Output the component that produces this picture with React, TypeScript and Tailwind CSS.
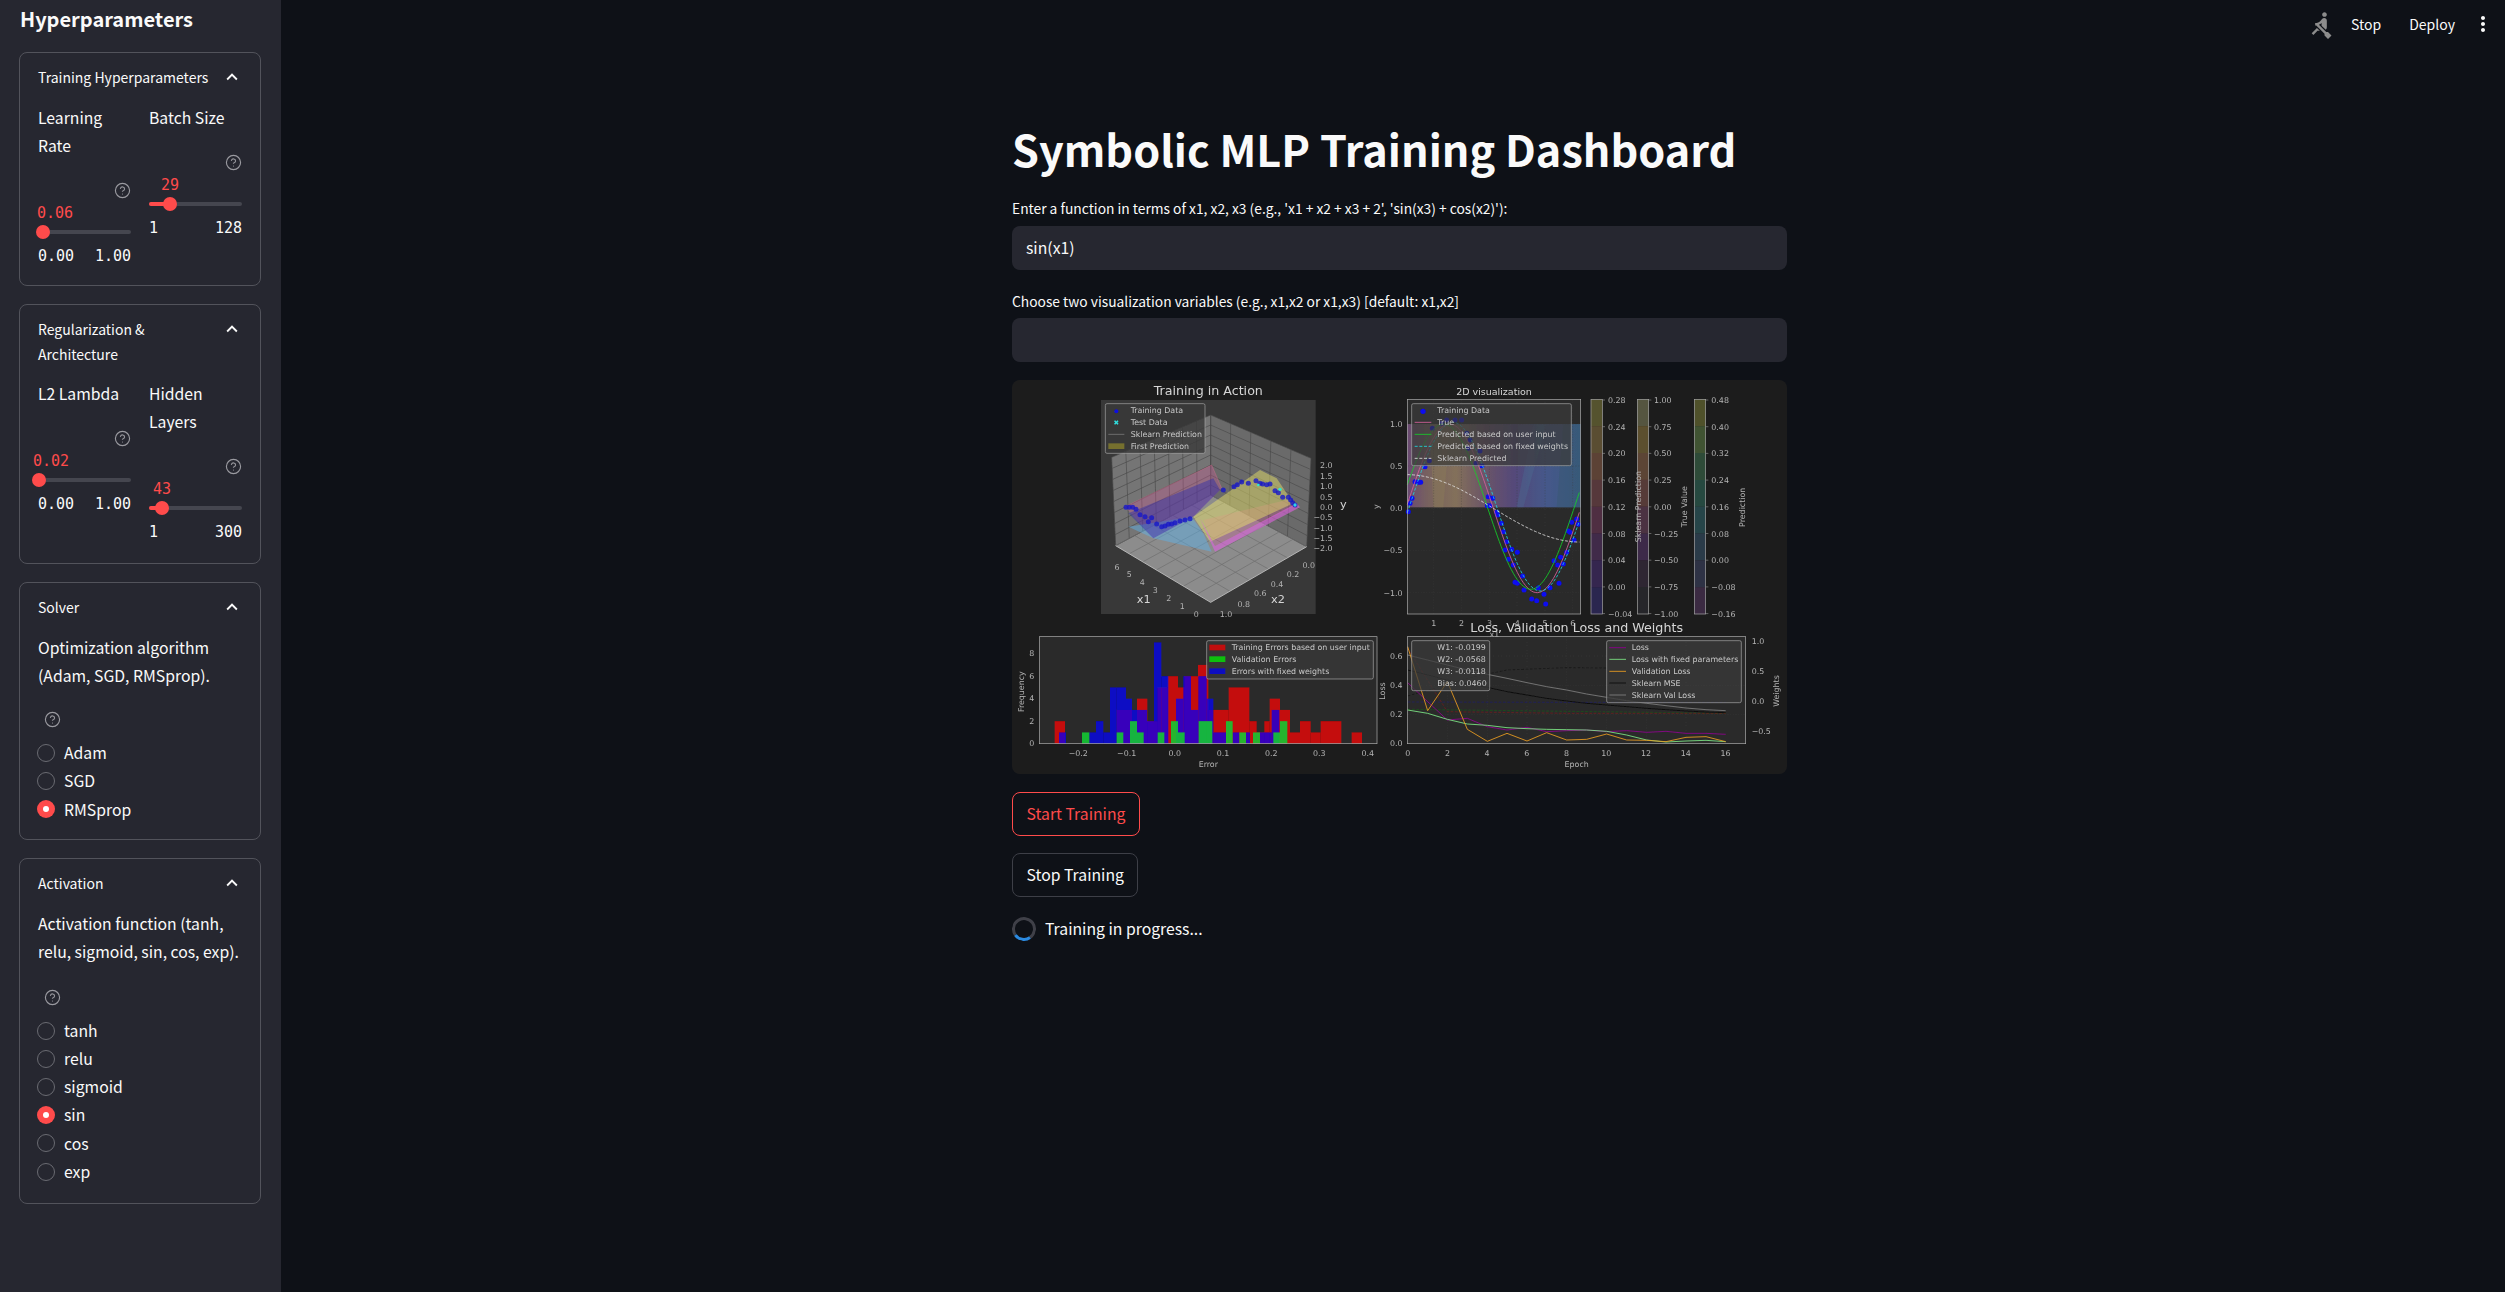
import { CircleHelp } from 'lucide-react';
import { MdExpandLess, MdMoreVert, MdRowing } from 'react-icons/md';

type Pt = [number, number];

const TICK = 23.7;

const pts = (list: Pt[]) => list.map((p) => p.join(',')).join(' ');

const gridPath = (a: Pt, b: Pt, c: Pt, d: Pt, nu: number, nv: number) => {
    // a-b top edge, d-c bottom edge
    const mix = (p: Pt, q: Pt, t: number): Pt => [p[0] + (q[0] - p[0]) * t, p[1] + (q[1] - p[1]) * t];
    let out = '';
    for (let i = 0; i <= nu; i++) {
        const s = mix(a, b, i / nu);
        const e = mix(d, c, i / nu);
        out += `M${s[0]} ${s[1]}L${e[0]} ${e[1]}`;
    }
    for (let j = 0; j <= nv; j++) {
        const s = mix(a, d, j / nv);
        const e = mix(b, c, j / nv);
        out += `M${s[0]} ${s[1]}L${e[0]} ${e[1]}`;
    }
    return out;
};

const curve = (fn: (t: number) => number) => {
    const out: Pt[] = [];
    for (let px = 52; px <= 572; px += 6) {
        const t = (px - 48) / 83.4;
        out.push([px, 415 - 253 * fn(t)]);
    }
    return pts(out);
};

const yFromCount = (n: number) => 1121 - n * 33.75;

const redBars: number[][] = [
    [164, 195, 2], [350, 396, 3], [396, 411, 2], [411, 442, 4], [442, 472, 2], [472, 503, 5], [503, 534, 6], [534, 553, 5],
    [553, 573, 6], [573, 594, 6], [594, 625, 7], [625, 640, 3], [640, 686, 3], [686, 748, 5], [748, 770, 2], [770, 793, 1],
    [793, 809, 2], [809, 840, 4], [840, 870, 3], [870, 900, 1], [900, 932, 2], [932, 962, 1], [962, 1024, 2], [1055, 1086, 1],
];
const blueBars: number[][] = [
    [177, 198, 1], [268, 288, 1], [288, 310, 2], [310, 330, 1], [330, 350, 5], [350, 378, 5], [378, 396, 4],
    [396, 411, 3], [411, 441, 3], [441, 462, 2], [462, 484, 9], [484, 505, 6], [528, 550, 4], [550, 573, 6],
    [573, 595, 3], [595, 620, 6], [620, 640, 4], [640, 678, 1], [698, 718, 1], [738, 750, 1], [780, 815, 1],
    [815, 838, 3],
];
const greenBars: number[][] = [
    [246, 268, 1], [350, 370, 1], [390, 411, 2], [411, 431, 1], [473, 493, 1], [513, 534, 2], [534, 554, 1],
    [596, 637, 2], [678, 698, 2], [718, 738, 1], [759, 780, 1], [820, 840, 1], [840, 862, 2],
];

const dots3d: Pt[] = [
    [78, 262], [88, 262], [98, 262], [108, 268], [120, 284], [135, 290], [145, 305], [155, 293], [170, 312],
    [185, 320], [195, 318], [205, 313], [215, 312], [225, 308], [240, 303], [255, 300], [270, 296], [370, 210],
    [402, 200], [412, 194], [425, 186], [445, 190], [468, 182], [480, 190], [488, 192], [500, 194], [510, 192],
    [525, 212], [535, 218], [548, 232], [565, 232], [572, 240], [578, 248], [585, 255],
];

const dots2d: Pt[] = [
    [25, 350], [30, 325], [36, 310], [45, 260], [55, 262], [62, 262], [75, 215], [88, 197], [97, 100], [125, 85],
    [140, 75], [165, 75], [185, 75], [200, 115], [210, 135], [205, 160], [228, 205], [240, 168], [246, 212],
    [265, 305], [278, 310], [262, 332], [270, 332], [290, 352], [293, 360], [304, 385], [310, 410], [320, 440],
    [315, 465], [335, 463], [352, 472], [325, 493], [340, 510], [368, 543], [345, 562], [352, 565], [372, 585],
    [395, 612], [410, 617], [415, 578], [432, 598], [437, 627], [450, 578], [462, 497], [473, 510], [482, 487],
    [490, 507], [500, 472], [477, 565], [505, 408], [510, 412], [515, 382], [522, 435], [530, 372], [535, 388],
];

const epochX = [53, 113, 172, 232, 292, 351, 411, 470, 530, 590, 650, 710, 770, 828, 888, 948, 1007];
const zipX = (ys: number[]) => pts(ys.map((y, i) => [epochX[i], y] as Pt));
const lossLine = zipX([938, 995, 1050, 1045, 1070, 1080, 1072, 1085, 1082, 1080, 1085, 1082, 1087, 1084, 1090, 1090, 1093]);
const fixedLine = zipX([1020, 1030, 1048, 1062, 1066, 1073, 1076, 1078, 1079, 1080, 1084, 1095, 1110, 1116, 1113, 1111, 1115]);
const valLine = zipX([830, 1022, 935, 1078, 1114, 1090, 1113, 1088, 1110, 1108, 1092, 1110, 1111, 1115, 1102, 1100, 1115]);
const mseLine = zipX([900, 915, 930, 942, 952, 965, 975, 985, 993, 1000, 1005, 1010, 1015, 1019, 1023, 1026, 1028]);
const valMseLine = zipX([855, 870, 885, 900, 913, 925, 938, 950, 960, 972, 982, 992, 1000, 1007, 1014, 1019, 1022]);

const bar1 = ['#55522f', '#5a4d33', '#5c4236', '#57393a', '#4f2f42', '#41294a', '#342650', '#2b2550'];
const bar2 = ['#55553f', '#5c4f2e', '#5c4434', '#563a38', '#4c3142', '#3e2a48', '#2e2630', '#28282c'];
const bar3 = ['#50512c', '#3f5231', '#2f4c38', '#264840', '#27444a', '#2a3a48', '#2e3244', '#3a2a42'];

const ColorBar = ({ x, colors, labels, labelX }: { x: number; colors: string[]; labels: string[]; labelX: number }) => (
    <g>
        {colors.map((c, i) => (
            <rect key={i} x={x} y={88 + i * 80.5} width={34} height={81} fill={c} />
        ))}
        <rect x={x} y={88} width={34} height={644} fill="none" stroke="#a8a8a8" strokeWidth={2} />
        {labels.map((l, i) => (
            <g key={l}>
                <line x1={x + 34} x2={x + 42} y1={90 + i * 80.1} y2={90 + i * 80.1} stroke="#aaa" strokeWidth={1.5} />
                <text x={labelX} y={99 + i * 80.1} fill="#b4b4b4" fontSize={TICK}>
                    {l}
                </text>
            </g>
        ))}
    </g>
);

const TrainingPlot = () => (
    <svg viewBox="36 30 2325 1182" className="block w-full h-full font-['DejaVu_Sans',sans-serif]">
        <defs>
            <filter id="soft" x="0" y="0" width="1" height="1">
                <feGaussianBlur stdDeviation="1.8" />
            </filter>
            <linearGradient id="contour" x1="0" y1="0" x2="1" y2="0">
                <stop offset="0" stopColor="#6a4a72" />
                <stop offset="0.12" stopColor="#78625f" />
                <stop offset="0.28" stopColor="#83705a" />
                <stop offset="0.45" stopColor="#6a5468" />
                <stop offset="0.62" stopColor="#54497a" />
                <stop offset="0.8" stopColor="#45588a" />
                <stop offset="1" stopColor="#3c5c80" />
            </linearGradient>
        </defs>
        <g filter="url(#soft)">
            <rect x="36" y="30" width="2325" height="1182" fill="#1e1e1e" />

            {/* 3d surface plot */}
            <rect x="303" y="90" width="644" height="642" fill="#373737" />
            <polygon points={pts([[335, 262], [632, 135], [632, 375], [347, 527]])} fill="#757575" />
            <polygon points={pts([[632, 135], [933, 265], [920, 530], [632, 375]])} fill="#6b6b6b" />
            <polygon points={pts([[347, 527], [632, 375], [920, 530], [632, 697]])} fill="#8c8c8c" />
            <path d={gridPath([335, 262], [632, 135], [632, 375], [347, 527], 7, 8)} stroke="#4a4a4a" strokeWidth={2} fill="none" />
            <path d={gridPath([632, 135], [933, 265], [920, 530], [632, 375], 5, 8)} stroke="#4a4a4a" strokeWidth={2} fill="none" />
            <path d={gridPath([347, 527], [632, 375], [920, 530], [632, 697], 5, 7)} stroke="#6c6c6c" strokeWidth={2} fill="none" />
            <path d="M347 527L632 697L920 530M632 697" stroke="#dddddd" strokeWidth={2} fill="none" />
            <g transform="translate(300 150)">
                <polygon points="75,260 335,135 365,205 280,290 160,355" fill="#d85a9a" fillOpacity={0.32} />
                <polygon points="310,300 345,378 590,255 560,240" fill="#d85a9a" fillOpacity={0.3} />
                <polygon points="85,320 275,290 310,340 335,395 160,355" fill="#5ab4ee" fillOpacity={0.45} />
                <polygon points="85,280 340,175 360,210 280,290 160,355" fill="#2c2ca8" fillOpacity={0.45} />
                <polygon points="280,290 480,150 530,175 580,250 330,365" fill="#f0e868" fillOpacity={0.45} />
                <polygon points="300,295 345,395 600,262 590,250 345,378" fill="#e060e0" fillOpacity={0.6} />
                <polyline points="75,260 335,135 365,205" fill="none" stroke="#e07090" strokeOpacity={0.5} strokeWidth={2} />
                {dots3d.map(([x, y], i) => (
                    <circle key={i} cx={x} cy={y} r={7.5} fill="#1818c8" fillOpacity={0.8} />
                ))}
                <circle cx={540} cy={208} r={5} fill="#30e8d0" />
                <circle cx={475} cy={195} r={4} fill="#30e8d0" />
                <circle cx={585} cy={255} r={5} fill="#30d0e8" />
            </g>
            <text x="625" y="76" fill="#d6d6d6" fontSize={38} textAnchor="middle">Training in Action</text>
            <rect x="316" y="101" width="299" height="149" rx="5" fill="#3a3a3a" fillOpacity={0.8} stroke="#a8a8a8" strokeWidth={2} />
            <circle cx="349" cy="124" r="6" fill="#1010e0" />
            <text x="349" y="166" fill="#30e0e0" fontSize={20} textAnchor="middle">✖</text>
            <line x1="325" x2="373" y1="193" y2="193" stroke="#8a8a8a" strokeWidth={2} />
            <rect x="325" y="220" width="48" height="17" fill="#76702f" />
            <text x="392" y="130" fill="#c8c8c8" fontSize={TICK}>Training Data</text>
            <text x="392" y="166" fill="#c8c8c8" fontSize={TICK}>Test Data</text>
            <text x="392" y="201" fill="#c8c8c8" fontSize={TICK}>Sklearn Prediction</text>
            <text x="392" y="236" fill="#c8c8c8" fontSize={TICK}>First Prediction</text>
            {[['2.0', 294], ['1.5', 326], ['1.0', 358], ['0.5', 389], ['0.0', 421], ['−0.5', 451], ['−1.0', 483], ['−1.5', 513], ['−2.0', 543]].map(([t, y]) => (
                <text key={t} x="998" y={y} fill="#b4b4b4" fontSize={TICK} textAnchor="end">{t}</text>
            ))}
            <text x="1030" y="414" fill="#d6d6d6" fontSize={34} textAnchor="middle">y</text>
            {[['6', 351, 601], ['5', 388, 622], ['4', 427, 645], ['3', 466, 669], ['2', 506, 692], ['1', 547, 716], ['0', 589, 740]].map(([t, x, y]) => (
                <text key={t} x={x} y={y} fill="#b4b4b4" fontSize={TICK} textAnchor="middle">{t}</text>
            ))}
            {[['0.0', 926, 594], ['0.2', 879, 622], ['0.4', 831, 650], ['0.6', 781, 679], ['0.8', 731, 710], ['1.0', 678, 740]].map(([t, x, y]) => (
                <text key={t} x={x} y={y} fill="#b4b4b4" fontSize={TICK} textAnchor="middle">{t}</text>
            ))}
            <text x="431" y="698" fill="#d6d6d6" fontSize={34} textAnchor="middle">x1</text>
            <text x="834" y="698" fill="#d6d6d6" fontSize={34} textAnchor="middle">x2</text>

            {/* histogram */}
            <rect x="118" y="800" width="1013" height="321" fill="#2b2b2b" />
            {redBars.map(([a, b, n], i) => (
                <rect key={i} x={a} y={yFromCount(n)} width={b - a} height={n * 33.75} fill="#ff0000" fillOpacity={0.72} />
            ))}
            {blueBars.map(([a, b, n], i) => (
                <rect key={i} x={a} y={yFromCount(n)} width={b - a} height={n * 33.75} fill="#0000ff" fillOpacity={0.72} />
            ))}
            {greenBars.map(([a, b, n], i) => (
                <rect key={i} x={a} y={yFromCount(n)} width={b - a} height={n * 33.75} fill="#14c832" fillOpacity={0.9} />
            ))}
            <rect x="118" y="800" width="1013" height="321" fill="none" stroke="#b0b0b0" strokeWidth={2} />
            <rect x="620" y="812" width="500" height="115" rx="5" fill="#3a3a3a" fillOpacity={0.8} stroke="#a8a8a8" strokeWidth={2} />
            <rect x="628" y="824" width="48" height="17" fill="#c00c0c" />
            <rect x="628" y="859" width="48" height="17" fill="#10c010" />
            <rect x="628" y="895" width="48" height="17" fill="#1010c0" />
            <text x="695" y="841" fill="#c8c8c8" fontSize={TICK}>Training Errors based on user input</text>
            <text x="695" y="876" fill="#c8c8c8" fontSize={TICK}>Validation Errors</text>
            <text x="695" y="912" fill="#c8c8c8" fontSize={TICK}>Errors with fixed weights</text>
            {[['−0.2', 235], ['−0.1', 380], ['0.0', 524], ['0.1', 669], ['0.2', 814], ['0.3', 958], ['0.4', 1103]].map(([t, x]) => (
                <text key={t} x={x} y="1158" fill="#b4b4b4" fontSize={TICK} textAnchor="middle">{t}</text>
            ))}
            {[['0', 1129], ['2', 1061], ['4', 993], ['6', 926], ['8', 859]].map(([t, y]) => (
                <text key={t} x="103" y={y} fill="#b4b4b4" fontSize={TICK} textAnchor="end">{t}</text>
            ))}
            <text x="625" y="1190" fill="#b4b4b4" fontSize={TICK} textAnchor="middle">Error</text>
            <text transform="translate(73 965) rotate(-90)" fill="#b4b4b4" fontSize={TICK} textAnchor="middle">Frequency</text>

            {/* left tick labels of the right hand plots */}
            {[['1.0', 170], ['0.5', 297], ['0.0', 423], ['−0.5', 550], ['−1.0', 677]].map(([t, y]) => (
                <text key={t} x="1208" y={y} fill="#b4b4b4" fontSize={TICK} textAnchor="end">{t}</text>
            ))}
            <text transform="translate(1137 410) rotate(-90)" fill="#b4b4b4" fontSize={TICK} textAnchor="middle">y</text>
            {[['0.6', 866], ['0.4', 954], ['0.2', 1041], ['0.0', 1129]].map(([t, y]) => (
                <text key={t} x="1208" y={y} fill="#b4b4b4" fontSize={TICK} textAnchor="end">{t}</text>
            ))}
            <text transform="translate(1156 963) rotate(-90)" fill="#b4b4b4" fontSize={TICK} textAnchor="middle">Loss</text>

            <g transform="translate(1170 0)">
                {/* 2d visualization */}
                <rect x="52" y="88" width="520" height="644" fill="#2b2b2b" />
                <rect x="52" y="162" width="520" height="250" fill="url(#contour)" />
                <polygon points="120,162 180,162 160,412 130,412" fill="#8a7a58" fillOpacity={0.5} />
                <polygon points="430,162 470,162 400,412 380,412" fill="#4c6c90" fillOpacity={0.4} />
                <polygon points="520,162 572,162 572,412 500,412" fill="#34586e" fillOpacity={0.4} />
                <g stroke="#3c3c3c" strokeWidth={1} strokeDasharray="4 4">
                    {[131, 214, 298, 381, 465, 548].map((x) => (
                        <line key={x} x1={x} x2={x} y1={88} y2={732} />
                    ))}
                    {[162, 288, 415, 541, 668].map((y) => (
                        <line key={y} x1={52} x2={572} y1={y} y2={y} />
                    ))}
                </g>
                <g transform="translate(30 75)">
                    {dots2d.map(([x, y], i) => (
                        <circle key={i} cx={x} cy={y} r={7.5} fill="#0808f0" />
                    ))}
                </g>
                <polyline points={curve((t) => Math.sin(t))} fill="none" stroke="#d8609c" strokeWidth={2.5} />
                <polyline points={curve((t) => 0.98 * Math.sin(t + 0.22) + 0.02)} fill="none" stroke="#14d028" strokeWidth={2.5} />
                <polyline points={curve((t) => Math.sin(t - 0.12) + 0.02)} fill="none" stroke="#20d8e0" strokeWidth={2.5} strokeDasharray="9 5" />
                <polyline points={curve((t) => 0.4 * Math.cos(t * 0.5))} fill="none" stroke="#e0e0e0" strokeWidth={2.5} strokeDasharray="9 5" />
                <rect x="52" y="88" width="520" height="644" fill="none" stroke="#b0b0b0" strokeWidth={2} />
                <rect x="65" y="101" width="479" height="186" rx="5" fill="#3a3a3a" fillOpacity={0.72} stroke="#a8a8a8" strokeWidth={2} />
                <circle cx="99" cy="124" r="8" fill="#0808f0" />
                <line x1="74" x2="124" y1="157" y2="157" stroke="#d8609c" strokeWidth={2.5} />
                <line x1="74" x2="124" y1="193" y2="193" stroke="#14d028" strokeWidth={2.5} />
                <line x1="74" x2="124" y1="229" y2="229" stroke="#20d8e0" strokeWidth={2.5} strokeDasharray="9 5" />
                <line x1="74" x2="124" y1="265" y2="265" stroke="#e0e0e0" strokeWidth={2.5} strokeDasharray="9 5" />
                <text x="142" y="130" fill="#c8c8c8" fontSize={TICK}>Training Data</text>
                <text x="142" y="166" fill="#c8c8c8" fontSize={TICK}>True</text>
                <text x="142" y="201" fill="#c8c8c8" fontSize={TICK}>Predicted based on user input</text>
                <text x="142" y="236" fill="#c8c8c8" fontSize={TICK}>Predicted based on fixed weights</text>
                <text x="142" y="272" fill="#c8c8c8" fontSize={TICK}>Sklearn Predicted</text>
                <text x="312" y="76" fill="#d6d6d6" fontSize={28.5} textAnchor="middle">2D visualization</text>
                {[1, 2, 3, 4, 5, 6].map((n) => (
                    <text key={n} x={48 + n * 83.4} y={768} fill="#b4b4b4" fontSize={TICK} textAnchor="middle">{n}</text>
                ))}
                <text x="313" y="802" fill="#b4b4b4" fontSize={TICK} textAnchor="middle">x1</text>

                <ColorBar x={603} colors={bar1} labelX={654} labels={['0.28', '0.24', '0.20', '0.16', '0.12', '0.08', '0.04', '0.00', '−0.04']} />
                <ColorBar x={742} colors={bar2} labelX={792} labels={['1.00', '0.75', '0.50', '0.25', '0.00', '−0.25', '−0.50', '−0.75', '−1.00']} />
                <ColorBar x={913} colors={bar3} labelX={964} labels={['0.48', '0.40', '0.32', '0.24', '0.16', '0.08', '0.00', '−0.08', '−0.16']} />
                <text transform="translate(752 410) rotate(-90)" fill="#b4b4b4" fontSize={TICK} textAnchor="middle">Sklearn Prediction</text>
                <text transform="translate(890 410) rotate(-90)" fill="#b4b4b4" fontSize={TICK} textAnchor="middle">True Value</text>
                <text transform="translate(1066 412) rotate(-90)" fill="#b4b4b4" fontSize={TICK} textAnchor="middle">Prediction</text>

                {/* loss plot */}
                <rect x="52" y="800" width="1015" height="321" fill="#2b2b2b" />
                <g stroke="#3c3c3c" strokeWidth={1} strokeDasharray="4 4">
                    {[172, 292, 411, 530, 650, 770, 888].map((x) => (
                        <line key={x} x1={x} x2={x} y1={800} y2={1121} />
                    ))}
                    <line x1={52} x2={1067} y1={858} y2={858} />
                    <line x1={52} x2={1067} y1={946} y2={946} />
                    <line x1={52} x2={1067} y1={1033} y2={1033} />
                </g>
                <polyline points="53,978 232,925 351,900 530,893 770,895 1007,893" fill="none" stroke="#141414" strokeWidth={2} strokeDasharray="8 5" />
                <polyline points="53,996 530,997 1007,997" fill="none" stroke="#1c1c70" strokeWidth={2} strokeDasharray="8 5" />
                <polyline points="53,1018 530,1024 1007,1030" fill="none" stroke="#155a15" strokeWidth={2} strokeDasharray="8 5" />
                <polyline points="53,835 172,1025 530,1030 1007,1030" fill="none" stroke="#7a1a1a" strokeWidth={2} strokeDasharray="8 5" />
                <polyline points={lossLine} fill="none" stroke="#900090" strokeWidth={2.5} />
                <polyline points={mseLine} fill="none" stroke="#0a0a0a" strokeWidth={2.5} />
                <polyline points={valMseLine} fill="none" stroke="#808080" strokeWidth={2.5} />
                <polyline points={fixedLine} fill="none" stroke="#80ee88" strokeWidth={2.5} />
                <polyline points={valLine} fill="none" stroke="#f0a020" strokeWidth={2.5} />
                <rect x="52" y="800" width="1015" height="321" fill="none" stroke="#b0b0b0" strokeWidth={2} />

                <rect x="65" y="812" width="234" height="150" rx="5" fill="#3a3a3a" fillOpacity={0.72} stroke="#a8a8a8" strokeWidth={2} />
                <text x="142" y="841" fill="#c8c8c8" fontSize={TICK}>W1: -0.0199</text>
                <text x="142" y="876" fill="#c8c8c8" fontSize={TICK}>W2: -0.0568</text>
                <text x="142" y="912" fill="#c8c8c8" fontSize={TICK}>W3: -0.0118</text>
                <text x="142" y="947" fill="#c8c8c8" fontSize={TICK}>Bias: 0.0460</text>
                <rect x="650" y="812" width="404" height="186" rx="5" fill="#3a3a3a" fillOpacity={0.8} stroke="#a8a8a8" strokeWidth={2} />
                <line x1="658" x2="708" y1="833" y2="833" stroke="#900090" strokeWidth={2.5} />
                <line x1="658" x2="708" y1="868" y2="868" stroke="#80ee88" strokeWidth={2.5} />
                <line x1="658" x2="708" y1="904" y2="904" stroke="#f0a020" strokeWidth={2.5} />
                <line x1="658" x2="708" y1="939" y2="939" stroke="#0a0a0a" strokeWidth={2.5} />
                <line x1="658" x2="708" y1="975" y2="975" stroke="#808080" strokeWidth={2.5} />
                <text x="725" y="841" fill="#c8c8c8" fontSize={TICK}>Loss</text>
                <text x="725" y="876" fill="#c8c8c8" fontSize={TICK}>Loss with fixed parameters</text>
                <text x="725" y="912" fill="#c8c8c8" fontSize={TICK}>Validation Loss</text>
                <text x="725" y="947" fill="#c8c8c8" fontSize={TICK}>Sklearn MSE</text>
                <text x="725" y="983" fill="#c8c8c8" fontSize={TICK}>Sklearn Val Loss</text>

                <text x="560" y="786" fill="#d6d6d6" fontSize={38} textAnchor="middle">Loss, Validation Loss and Weights</text>
                {[0, 2, 4, 6, 8, 10, 12, 14, 16].map((n) => (
                    <text key={n} x={53 + n * 59.6} y={1158} fill="#b4b4b4" fontSize={TICK} textAnchor="middle">{n}</text>
                ))}
                <text x="560" y="1190" fill="#b4b4b4" fontSize={TICK} textAnchor="middle">Epoch</text>
                {[['1.0', 823], ['0.5', 913], ['0.0', 1003], ['−0.5', 1093]].map(([t, y]) => (
                    <text key={t} x={1085} y={y} fill="#b4b4b4" fontSize={TICK}>{t}</text>
                ))}
                <text transform="translate(1168 963) rotate(-90)" fill="#b4b4b4" fontSize={TICK} textAnchor="middle">Weights</text>
            </g>
        </g>
    </svg>
);

const Help = ({ className = '' }: { className?: string }) => (
    <CircleHelp size={17} strokeWidth={1.6} className={`text-[#9a9aa0] ${className}`} />
);

type SliderProps = {
    label: string;
    value: string;
    min: string;
    max: string;
    fill: string;
    thumb: string;
    valueOffset: string;
};

const Slider = ({ label, value, min, max, fill, thumb, valueOffset }: SliderProps) => (
    <div className="flex flex-col">
        <div className="text-[15.75px] leading-[28px] text-[#fafafa]">{label}</div>
        <div className="flex justify-end mt-[22px]">
            <Help />
        </div>
        <div className={`mt-[4px] font-['DejaVu_Sans_Mono',monospace] text-[15px] leading-[20px] text-[#ff4b4b] ${valueOffset}`}>
            {value}
        </div>
        <div className="relative mt-[7px] h-[4px] rounded-full bg-[#45464f]">
            <div className={`h-full rounded-full bg-[#ff4b4b] ${fill}`} />
            <div className={`absolute top-[-5px] size-[14px] rounded-full bg-[#ff4b4b] ${thumb}`} />
        </div>
        <div className="mt-[12px] flex justify-between font-['DejaVu_Sans_Mono',monospace] text-[15px] leading-[20px] text-[#fafafa]">
            <span>{min}</span>
            <span>{max}</span>
        </div>
    </div>
);

const Card = ({ title, className, children }: { title: string; className: string; children: React.ReactNode }) => (
    <div className={`w-[242px] rounded-[8px] border border-[#52535b] px-[18px] pt-[12px] ${className}`}>
        <div className="flex items-start justify-between">
            <div className="w-[180px] text-[14px] leading-[25px] text-[#fafafa]">{title}</div>
            <MdExpandLess size={22} className="mr-[-1px] mt-[1px] text-[#fafafa]" />
        </div>
        {children}
    </div>
);

type RadioGroupProps = {
    text: string;
    options: string[];
    selected: string;
    helpClass: string;
};

const RadioGroup = ({ text, options, selected, helpClass }: RadioGroupProps) => (
    <div className="mt-[14px]">
        <div className="text-[15.75px] leading-[28px] text-[#fafafa]">{text}</div>
        <Help className={`ml-[6px] ${helpClass}`} />
        <div className="mt-[11px] flex flex-col">
            {options.map((o) => (
                <div key={o} className="ml-[-1px] flex h-[28.2px] items-center gap-[9px] text-[15.75px] text-[#fafafa]">
                    {o === selected ? (
                        <span className="flex size-[18px] items-center justify-center rounded-full bg-[#ff4b4b]">
                            <span className="size-[6px] rounded-full bg-white" />
                        </span>
                    ) : (
                        <span className="size-[18px] rounded-full border-[1.5px] border-[#6a6b72]" />
                    )}
                    {o}
                </div>
            ))}
        </div>
    </div>
);

const Sidebar = () => (
    <aside className="flex w-[281px] shrink-0 flex-col items-start bg-[#262730] pl-[19px] pt-[5px]">
        <h2 className="ml-[1px] text-[20px] font-semibold leading-[28px] text-[#fafafa]">Hyperparameters</h2>
        <div className="mt-[19px] flex flex-col gap-[18px]">
            <Card title="Training Hyperparameters" className="pb-[19px]">
                <div className="mt-[14px] grid grid-cols-2 items-start gap-x-[18px]">
                    <Slider label="Learning Rate" value="0.06" min="0.00" max="1.00" fill="w-[5px]" thumb="left-[-2px]" valueOffset="ml-[-1px]" />
                    <Slider label="Batch Size" value="29" min="1" max="128" fill="w-[20px]" thumb="left-[14px]" valueOffset="ml-[12px]" />
                </div>
            </Card>
            <Card title="Regularization & Architecture" className="pb-[20.5px]">
                <div className="mt-[13px] grid grid-cols-2 items-start gap-x-[18px]">
                    <Slider label="L2 Lambda" value="0.02" min="0.00" max="1.00" fill="w-[2px]" thumb="left-[-6px]" valueOffset="ml-[-5px]" />
                    <Slider label="Hidden Layers" value="43" min="1" max="300" fill="w-[13px]" thumb="left-[6px]" valueOffset="ml-[4px]" />
                </div>
            </Card>
            <Card title="Solver" className="pb-[15px]">
                <RadioGroup
                    text="Optimization algorithm (Adam, SGD, RMSprop)."
                    options={['Adam', 'SGD', 'RMSprop']}
                    selected="RMSprop"
                    helpClass="mt-[21.5px]"
                />
            </Card>
            <Card title="Activation" className="pb-[17px]">
                <RadioGroup
                    text="Activation function (tanh, relu, sigmoid, sin, cos, exp)."
                    options={['tanh', 'relu', 'sigmoid', 'sin', 'cos', 'exp']}
                    selected="sin"
                    helpClass="mt-[23px]"
                />
            </Card>
        </div>
    </aside>
);

const App = () => {
    return (
        <div className="flex h-screen min-h-[1292px] w-full overflow-hidden bg-[#0e1117] font-['Noto_Sans_CJK_SC','Noto_Sans',sans-serif] text-[#fafafa]">
            <Sidebar />
            <main className="flex min-w-0 flex-1 flex-col">
                <header className="flex h-[48px] items-center justify-end text-[14px]">
                    <MdRowing size={28} className="mt-[1px] text-[#8c8c8c]" />
                    <span className="ml-[16px]">Stop</span>
                    <span className="ml-[28px]">Deploy</span>
                    <MdMoreVert size={24} className="ml-[16px] mr-[10px]" />
                </header>
                <section className="ml-[731px] w-[775px]">
                    <h1 className="mt-[64px] whitespace-nowrap text-[43.2px] font-bold leading-[72px] text-[#fafafa]">
                        Symbolic MLP Training Dashboard
                    </h1>
                    <label className="mt-[12px] block text-[13.8px] leading-[24px]">
                        Enter a function in terms of x1, x2, x3 (e.g., 'x1 + x2 + x3 + 2', 'sin(x3) + cos(x2)'):
                    </label>
                    <div className="mt-[6px] flex h-[44px] items-center rounded-[8px] bg-[#262730] px-[14px] text-[15.75px]">sin(x1)</div>
                    <label className="mt-[19px] block text-[13.8px] leading-[24px]">
                        Choose two visualization variables (e.g., x1,x2 or x1,x3) [default: x1,x2]
                    </label>
                    <div className="mt-[5px] h-[44px] rounded-[8px] bg-[#262730]" />
                    <div className="mt-[18px] h-[394px] overflow-hidden rounded-[8px]">
                        <TrainingPlot />
                    </div>
                    <button className="mt-[18px] flex h-[44px] items-center rounded-[8px] border border-[#ff4b4b] px-[13.5px] text-[15.75px] text-[#ff4b4b]">
                        Start Training
                    </button>
                    <button className="mt-[17px] flex h-[44px] items-center rounded-[8px] border border-[#3d3f47] px-[13.5px] text-[15.75px]">
                        Stop Training
                    </button>
                    <div className="mt-[20px] flex items-center gap-[9px] text-[15.75px] leading-[24px]">
                        <span className="size-[24px] rotate-[100deg] rounded-full border-[3px] border-[#3f4048] border-r-[#2b8ae0]" />
                        Training in progress...
                    </div>
                </section>
            </main>
        </div>
    );
};

export default App;
